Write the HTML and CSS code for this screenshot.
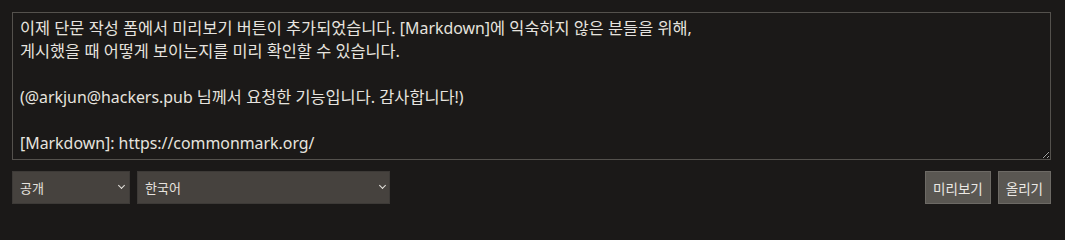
FILE: index.html
```html
<!DOCTYPE html>
<html lang="ko">
<head>
<meta charset="utf-8">
<link rel="stylesheet" href="styles.css">
</head>
<body>
<form class="composer">
<div class="body" role="textbox" aria-multiline="true"><span class="ko">이제 단문 작성 폼에서 미리보기 버튼이 추가되었습니다.</span> [Markdown]<span class="ko">에 익숙하지 않은 분들을 위해</span>,
<span class="ko">게시했을 때 어떻게 보이는지를 미리 확인할 수 있습니다.</span>

(@arkjun@hackers.pub <span class="ko">님께서 요청한 기능입니다. 감사합니다</span>!)

[Markdown]: https://commonmark.org/</div>
<div class="bar">
<span class="select-wrap vis"><select class="select"><option>공개</option></select></span>
<span class="select-wrap lang"><select class="select"><option>한국어</option></select></span>
<span class="spacer"></span>
<button type="button" class="btn">미리보기</button>
<button type="button" class="btn">올리기</button>
</div>
</form>
</body>
</html>
```
FILE: styles.css
```css
html, body {
  margin: 0;
  background: #1b1918;
}
body {
  font-family: "Noto Sans", "Noto Sans CJK KR", sans-serif;
  color: #e6e3df;
}
.composer {
  padding: 12px 14px 12px 12px;
  display: flex;
  flex-direction: column;
  gap: 11px;
}
.body {
  box-sizing: border-box;
  width: 100%;
  height: 148px;
  margin: 0;
  padding: 4px 7px;
  background: #1b1918;
  color: #e6e3df;
  border: 1px solid #54514d;
  font-family: "Noto Sans", "Noto Sans CJK KR", sans-serif;
  font-size: 15.9px;
  line-height: 23px;
  white-space: pre-wrap;
  overflow: hidden;
  resize: vertical;
}
.ko {
  font-size: 16.35px;
}
.bar {
  display: flex;
  align-items: center;
  gap: 7px;
}
.select-wrap {
  position: relative;
  display: block;
}
.select-wrap::after {
  content: "";
  position: absolute;
  top: 12px;
  width: 4px;
  height: 4px;
  border-right: 1.4px solid #e6e3df;
  border-bottom: 1.4px solid #e6e3df;
  transform: rotate(45deg);
  pointer-events: none;
}
.vis { width: 118px; }
.vis::after { right: 6px; }
.lang { width: 253px; }
.lang::after { right: 5px; }
.select {
  appearance: none;
  -webkit-appearance: none;
  display: block;
  width: 100%;
  height: 33px;
  box-sizing: border-box;
  margin: 0;
  padding: 0 7px;
  background: #46423e;
  color: #e6e3df;
  border: 1px solid #3d3a37;
  border-radius: 0;
  font-family: "Noto Sans", "Noto Sans CJK KR", sans-serif;
  font-size: 13px;
}
.spacer { flex: 1; }
.btn {
  height: 33px;
  box-sizing: border-box;
  margin: 0;
  padding: 0 7px;
  background: #5a5752;
  color: #ebe8e4;
  border: 1px solid #6d6a65;
  border-radius: 0;
  font-family: "Noto Sans", "Noto Sans CJK KR", sans-serif;
  font-size: 13.5px;
}
```
